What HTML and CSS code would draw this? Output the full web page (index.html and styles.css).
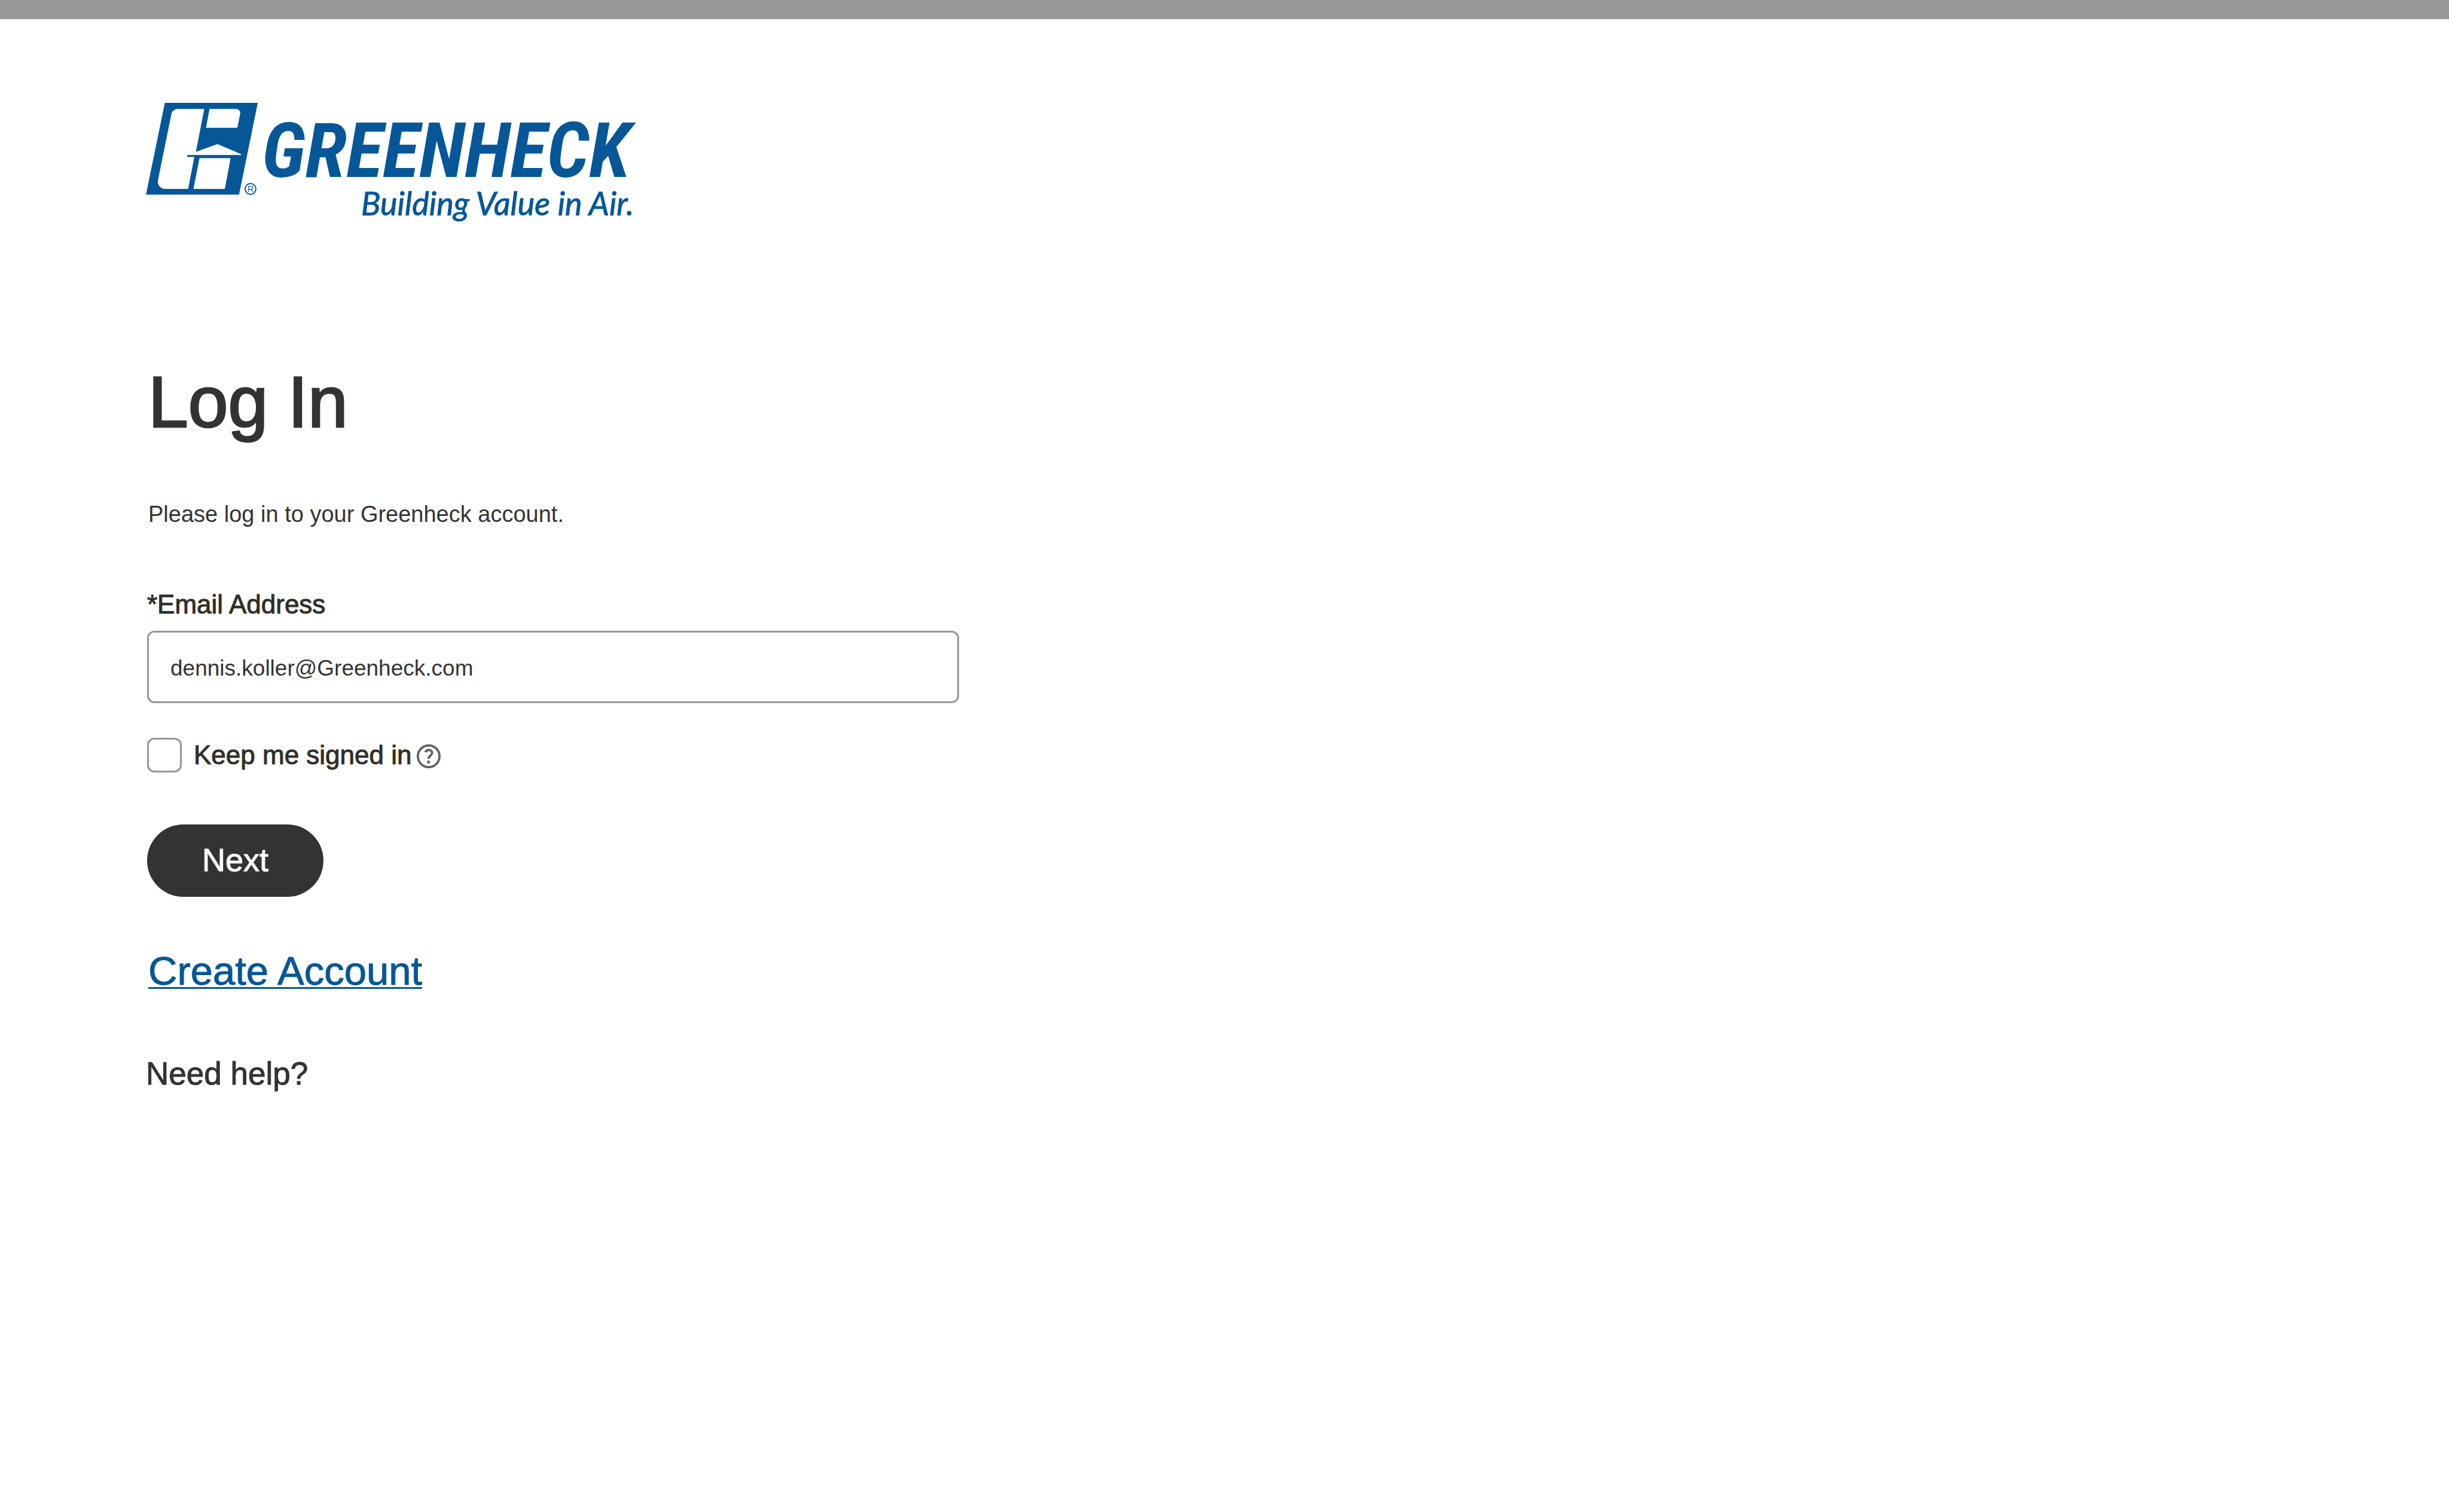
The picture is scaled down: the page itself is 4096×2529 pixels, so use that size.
FILE: index.html
```html
<!DOCTYPE html>
<html lang="en">
<head>
  <meta charset="utf-8">
  <meta name="viewport" content="width=device-width, initial-scale=1">
  <title>Log In | Greenheck</title>
  <link rel="stylesheet" href="styles.css">
</head>
<body>
  <div class="top-bar"></div>
  <main class="page">
    <header class="brand">
      <svg class="logo" viewBox="0 0 836 204" role="img" aria-label="Greenheck, Building Value in Air">
        <svg class="logo-mark" width="188" height="154" viewBox="54 54 780 640">
          <path fill-rule="evenodd" d="M185 54H831L701 692H54Z
            M275 97H459L401 395L551 341L716 411V417H340V430H390L347 652H184C153 650 132 622 137 594L231 130C235 112 252 98 275 97Z
            M496 97H680C698 98 711 112 709 128L690 222Q689 228 683 228H471Z
            M426 438H642L603 647Q602 652 597 652H384Z"/>
        </svg>
        <circle class="logo-ring" cx="175" cy="144" r="9"/>
        <text class="logo-reg" x="175" y="149" text-anchor="middle">R</text>
        <text class="logo-name" x="194" y="124">GREENHECK</text>
        <text class="logo-tagline" x="360" y="188">Building Value in Air.</text>
      </svg>
    </header>

    <h1 class="title">Log In</h1>
    <p class="intro">Please log in to your Greenheck account.</p>

    <form class="login-form" action="#" method="post">
      <label class="label" for="email">*Email Address</label>
      <input class="text-field" type="email" id="email" name="email" value="dennis.koller@Greenheck.com" required>

      <div class="remember">
        <input class="checkbox" type="checkbox" id="remember" name="remember">
        <label class="label" for="remember">Keep me signed in</label>
        <button class="hint" type="button" aria-label="About staying signed in">
          <svg class="hint-icon" viewBox="72 72 168 168" aria-hidden="true">
            <circle cx="156" cy="156" r="76"/>
            <path d="M132 127C137 117 146 112 157 112C171 112 180 120 180 132C180 150 155 152 155 174"/>
            <circle class="hint-dot" cx="155" cy="196" r="11"/>
          </svg>
        </button>
      </div>

      <button class="next" type="submit">Next</button>
    </form>

    <a class="create" href="#create-account">Create Account</a>
    <button class="help" type="button">Need help?</button>
  </main>
</body>
</html>
```
FILE: styles.css
```css
* {
  box-sizing: border-box;
}

body {
  margin: 0;
  background: #fff;
  color: #333;
  font-family: "Liberation Sans", Arial, sans-serif;
}

button,
input {
  margin: 0;
  font: inherit;
  color: inherit;
}

.top-bar {
  height: 32px;
  background: #969696;
}

.page {
  display: flex;
  flex-direction: column;
  align-items: flex-start;
  padding: 140px 244px;
}

/* Brand */
.brand {
  margin-bottom: 224px;
}

.logo {
  display: block;
  width: 836px;
  height: 204px;
  overflow: visible;
  fill: #065798;
}

.logo-ring {
  fill: none;
  stroke: #065798;
  stroke-width: 2px;
}

.logo-reg {
  font-size: 14px;
}

.logo-name {
  font-family: "Noto Sans SemiCondensed", "Open Sans SemiCondensed", "Roboto Condensed", Roboto, sans-serif;
  font-size: 128px;
  font-weight: 700;
  font-style: italic;
}

.logo-tagline {
  font-family: Lato, sans-serif;
  font-size: 54px;
  font-style: italic;
  stroke: #065798;
  stroke-width: 1px;
}

/* Heading */
.title,
.intro,
.create {
  padding-left: 4px;
}

.title {
  margin: 0 0 92px;
  font-size: 120px;
  font-weight: 400;
  line-height: 144px;
  -webkit-text-stroke: 3px currentColor;
}

.intro {
  margin: 0 0 101px;
  font-size: 38px;
  line-height: 48px;
}

/* Form */
.login-form {
  display: flex;
  flex-direction: column;
  align-items: flex-start;
  width: 100%;
  max-width: 1360px;
  margin-bottom: 84px;
  padding-left: 2px;
}

.label {
  color: #302f27;
  font-size: 44px;
  line-height: 52px;
  -webkit-text-stroke: 1px currentColor;
}

.text-field {
  width: 100%;
  height: 121px;
  margin: 18px 0 58px;
  padding: 4px 36px 0;
  border: 3px solid #969696;
  border-radius: 12px;
  background: #fff;
  font-size: 37px;
}

.remember {
  display: flex;
  align-items: center;
  margin-bottom: 87px;
}

.checkbox {
  appearance: none;
  width: 58px;
  height: 58px;
  margin-right: 20px;
  border: 3px solid #969696;
  border-radius: 12px;
  background: #fff;
}

.checkbox:checked {
  background: #333;
}

.hint {
  display: flex;
  margin-left: 9px;
  padding: 4px 0 0;
  border: 0;
  background: none;
}

.hint-icon {
  width: 40px;
  height: 40px;
  fill: none;
  stroke: #5f6368;
  stroke-width: 16;
}

.hint-dot {
  fill: #5f6368;
  stroke: none;
}

.next {
  min-width: 295px;
  height: 121px;
  padding: 0 0 4px;
  border: 0;
  border-radius: 61px;
  background: #333;
  color: #fff;
  font-size: 54px;
  -webkit-text-stroke: 1px currentColor;
}

/* Secondary actions */
.create {
  margin-bottom: 100px;
  color: #065798;
  font-size: 67px;
  line-height: 80px;
  text-decoration: underline;
  text-decoration-thickness: 3px;
  text-decoration-skip-ink: none;
  text-underline-offset: 4px;
  -webkit-text-stroke: 1px currentColor;
}

.help {
  padding: 0;
  border: 0;
  background: none;
  font-size: 53px;
  line-height: 64px;
  -webkit-text-stroke: 1px currentColor;
}
```
